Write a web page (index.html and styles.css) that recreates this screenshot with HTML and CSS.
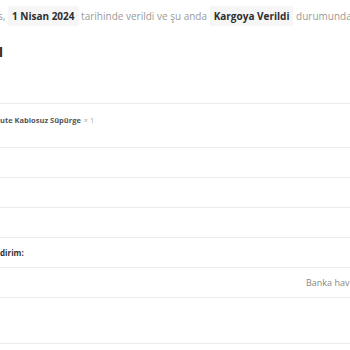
FILE: index.html
```html
<!DOCTYPE html>
<html lang="tr">
<head>
    <meta charset="UTF-8">
    <meta name="viewport" content="width=device-width, initial-scale=1.0">
    <title>Sipariş Detayları</title>
    <link rel="stylesheet" href="styles.css">
</head>
<body>

<p class="order-intro">
    s, <mark>1 Nisan 2024</mark> tarihinde verildi ve şu anda <mark>Kargoya Verildi</mark> durumunda.
</p>

<h2 class="order-title">l</h2>

<div class="order-table">
    <div class="row row-product">
        <span class="product-name">ute Kablosuz Süpürge</span>
        <span class="product-qty">× 1</span>
    </div>
    <div class="row"></div>
    <div class="row"></div>
    <div class="row"></div>
    <div class="row row-label">dirim:</div>
    <div class="row row-value">Banka hav</div>
    <div class="row row-tall"></div>
    <div class="row row-end"></div>
</div>

</body>
</html>
```

FILE: styles.css
```css
body {
    font-family: "Open Sans", Arial, sans-serif;
    margin: 0;
    padding: 0;
    background-color: #ffffff;
    overflow: hidden;
}
.order-intro {
    margin: 0;
    padding-top: 8px;
    line-height: 16px;
    font-size: 10px;
    color: #9a9a9a;
    white-space: nowrap;
    text-indent: -2px;
}
.order-intro mark {
    background-color: #f6f6f6;
    color: #2e2e2e;
    font-weight: 700;
    padding: 3px 4px;
}
.order-title {
    margin: 0;
    margin-top: 21px;
    margin-left: -1px;
    font-size: 13px;
    line-height: 14px;
    color: #222;
}
.order-table {
    margin-top: 44px;
}
.row {
    border-top: 1px solid #ebebeb;
    height: 29px;
    white-space: nowrap;
}
.row-product {
    box-sizing: border-box;
    height: 44px;
    padding-top: 11px;
    font-size: 7.5px;
    line-height: 10px;
}
.product-name {
    font-weight: 700;
    color: #555;
}
.product-qty {
    color: #aaa;
    margin-left: 1px;
}
.row-label {
    font-size: 8px;
    font-weight: 700;
    color: #333;
    line-height: 29px;
}
.row-value {
    font-size: 9px;
    color: #888;
    line-height: 29px;
    padding-left: 306px;
}
.row-tall {
    height: 45px;
}
.row-end {
    height: 0;
}
```
